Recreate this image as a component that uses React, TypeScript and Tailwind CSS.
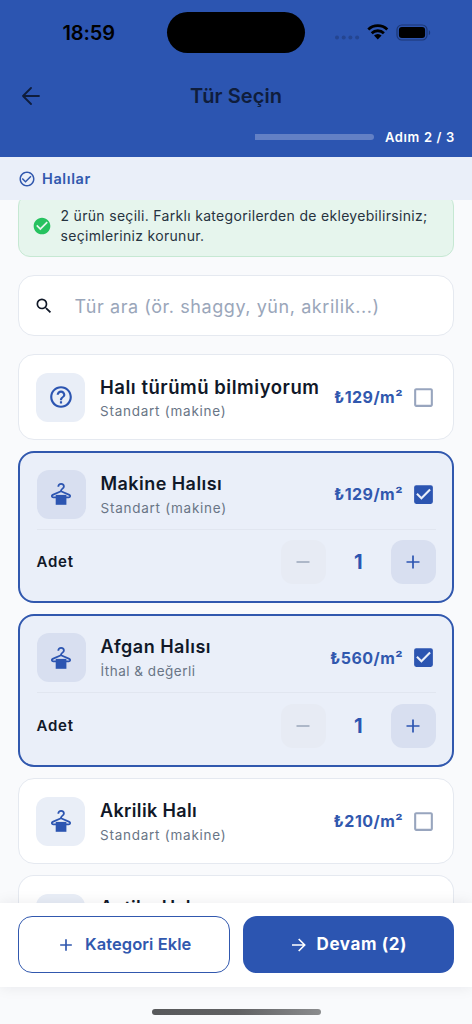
import React from "react";
import {
  MdAdd,
  MdCheckBox,
  MdCheckBoxOutlineBlank,
  MdCheckCircle,
  MdCheckCircleOutline,
  MdHelpOutline,
  MdSearch,
} from "react-icons/md";

type Product = {
  name: string;
  nameClass: string;
  detail: string;
  detailClass: string;
  price: string;
  help?: boolean;
  selected?: boolean;
};

const products: Product[] = [
  { name: "Halı türümü bilmiyorum", nameClass: "text-[18.5px] tracking-[0.53px]", detail: "Standart (makine)", detailClass: "tracking-[0.75px]", price: "₺129/m²", help: true },
  { name: "Makine Halısı", nameClass: "text-[18px] tracking-[0.45px]", detail: "Standart (makine)", detailClass: "tracking-[0.75px]", price: "₺129/m²", selected: true },
  { name: "Afgan Halısı", nameClass: "text-[18px] tracking-[0.5px]", detail: "İthal & değerli", detailClass: "tracking-[0.5px]", price: "₺560/m²", selected: true },
  { name: "Akrilik Halı", nameClass: "text-[18px] tracking-[0.37px]", detail: "Standart (makine)", detailClass: "tracking-[0.75px]", price: "₺210/m²" },
];

function StatusBar() {
  return (
    <div className="flex h-[65px] items-center">
      <div className="w-[167px] pl-[62.5px] text-[20px] font-semibold leading-6 tracking-[-0.1px] text-black">18:59</div>
      <div className="h-[41px] w-[138px] rounded-full bg-black" />
      <svg className="ml-[29px]" width="98" height="20" viewBox="0 0 98 20">
        <g fill="#244591">
          <circle cx="3" cy="14.6" r="2" />
          <circle cx="9.7" cy="14.6" r="2" />
          <circle cx="16.4" cy="14.6" r="2" />
          <circle cx="23.1" cy="14.6" r="2" />
        </g>
        <g fill="none" stroke="#000" strokeWidth="2.8">
          <path d="M34.3 6.4a13.8 13.8 0 0 1 19 0" />
          <path d="M37.7 10.2a8.8 8.8 0 0 1 12.2 0" />
        </g>
        <path d="M40 12.5a5.4 5.4 0 0 1 7.6 0L43.8 16.4z" />
        <rect x="63" y="2" width="30" height="15" rx="4.8" fill="none" stroke="#1c3775" strokeWidth="1.2" />
        <rect x="64.9" y="3.9" width="26.2" height="11.2" rx="3" />
        <path d="M94.8 7.3c1.8.6 1.8 4.2 0 4.8z" fill="#1c3775" />
      </svg>
    </div>
  );
}

function Header() {
  return (
    <header className="h-[157px] shrink-0 bg-[#2c55b1]">
      <StatusBar />
      <div className="grid h-[62px] grid-cols-[1fr_auto_1fr] items-center">
        <svg className="ml-[22px]" width="18" height="18" viewBox="0 0 18 18" fill="none" stroke="#0f1d3c" strokeWidth="1.8" strokeLinecap="round" strokeLinejoin="round">
          <path d="M9 1 1 9l8 8M1 9h16" />
        </svg>
        <h1 className="text-[20px] font-semibold leading-6 tracking-[0.08px] text-[#0f1d3c]">Tür Seçin</h1>
        <span />
      </div>
      <div className="flex h-5 items-center justify-end pr-[17px]">
        <div className="h-[6px] w-[119px] rounded-r-full bg-[#6380c5]" />
        <span className="ml-[11px] text-[13px] font-semibold leading-5 tracking-[0.65px] text-white">Adım 2 / 3</span>
      </div>
    </header>
  );
}

function HangerIcon() {
  return (
    <svg width="24" height="24" viewBox="0 0 24 24" fill="none" stroke="currentColor" strokeWidth="1.8" strokeLinejoin="round">
      <path d="M9.3 4.7C9.3 3 10.500 1.800 12.100 1.800s2.800 1.200 2.800 2.700c0 2.100-2.900 2.200-2.900 4.500" />
      <path d="M12 9.200 3.700 12.900c-1.400.7-1 2.500.6 2.500h15.400c1.600 0 2-1.800.6-2.500z" />
      <path d="M6.700 12.900h10.700v9.900H6.700z" fill="currentColor" stroke="none" />
    </svg>
  );
}

function Stepper() {
  return (
    <div className="mx-[16.5px] flex h-[66px] items-center border-t border-[#e1e6f0]">
      <span className="flex-1 text-[15px] font-semibold tracking-[0.75px] text-[#101828]">Adet</span>
      <button className="flex size-[44.5px] items-center justify-center rounded-xl bg-[#e7ebf4] text-[#9aa6ba]">
        <svg width="14" height="14" viewBox="0 0 14 14" stroke="currentColor" strokeWidth="1.5">
          <path d="M0.5 7h13" />
        </svg>
      </button>
      <span className="w-[65.5px] text-center text-[20px] font-bold text-[#2c55b1]">1</span>
      <button className="flex size-[44.5px] items-center justify-center rounded-xl bg-[#d8dff0] text-[#2c55b1]">
        <svg width="14" height="14" viewBox="0 0 14 14" stroke="currentColor" strokeWidth="1.7">
          <path d="M0.5 7h13M7 0.5v13" />
        </svg>
      </button>
    </div>
  );
}

function ProductCard({ item }: { item: Product }) {
  const frame = item.selected
    ? "h-[152.5px] border-2 border-[#3158ae] bg-[#eaeff9]"
    : "h-[85.5px] border border-[#e5e9f0] bg-white";
  const rowClass = item.selected
    ? "flex h-[76px] items-center pl-[16.5px] pr-4 pt-[7px]"
    : "flex h-[84px] items-center px-[17px]";
  const tile = item.selected ? "bg-[#d8dff0]" : "bg-[#e9eef7]";
  return (
    <article className={`shrink-0 rounded-2xl ${frame}`}>
      <div className={rowClass}>
        <div className={`flex size-[49px] items-center justify-center rounded-xl text-[#2c55b1] ${tile}`}>
          {item.help ? <MdHelpOutline size={26} /> : <HangerIcon />}
        </div>
        <div className="ml-[15px] flex-1 whitespace-nowrap pt-px">
          <h2 className={`font-semibold leading-[26px] text-[#101828] ${item.nameClass}`}>{item.name}</h2>
          <p className={`text-[13.5px] leading-[22px] text-[#697586] ${item.detailClass}`}>{item.detail}</p>
        </div>
        <span className="mr-[8px] text-[16px] font-bold tracking-[0.45px] text-[#3158ae]">{item.price}</span>
        {item.selected ? (
          <MdCheckBox size={25} className="text-[#2c55b1]" />
        ) : (
          <MdCheckBoxOutlineBlank size={25} className="text-[#98a5be]" />
        )}
      </div>
      {item.selected && <Stepper />}
    </article>
  );
}

function PartialCard() {
  return (
    <article className="flex h-[28px] shrink-0 overflow-hidden rounded-t-2xl border border-b-0 border-[#e5e9f0] bg-white px-[17px] pt-[18px]">
      <div className="h-[49px] w-[49px] shrink-0 rounded-xl bg-[#e9eef7]" />
      <h2 className="ml-[15px] mt-px whitespace-nowrap text-[18px] font-semibold leading-[26px] tracking-[0.2px] text-[#101828]">Antika Halı</h2>
    </article>
  );
}

export default function App() {
  return (
    <div className="flex h-[1024px] w-[472px] flex-col overflow-hidden bg-[#f9fafc] font-['Inter','Noto_Sans',sans-serif]">
      <Header />
      <div className="flex h-[43px] shrink-0 items-center gap-[6px] bg-[#eaeff9] pl-[18px] text-[#3158ae]">
        <MdCheckCircleOutline size={18} />
        <span className="text-[14.5px] font-semibold tracking-[0.6px]">Halılar</span>
      </div>
      <main className="h-[703px] shrink-0 overflow-hidden px-[18px]">
        <div className="-mt-[6px] flex h-[63px] items-center rounded-xl border border-[#c6e8d3] bg-[#e6f5ed] pl-[13px]">
          <MdCheckCircle size={20} className="shrink-0 text-[#26c25f]" />
          <p className="ml-[8.5px] whitespace-nowrap text-[14px] leading-5 tracking-[0.31px] text-[#26333f]">
            2 ürün seçili. Farklı kategorilerden de ekleyebilirsiniz;
            <br />
            seçimleriniz korunur.
          </p>
        </div>
        <div className="mt-[18px] flex h-[61px] items-center rounded-2xl border border-[#e5e9f0] bg-white pl-[15px]">
          <MdSearch size={20} className="text-[#101828]" />
          <span className="ml-[20.5px] whitespace-nowrap pt-px text-[18px] tracking-[0.57px] text-[#9aa6ba]">Tür ara (ör. shaggy, yün, akrilik...)</span>
        </div>
        <div className="mt-[18px] flex flex-col gap-[11.2px]">
          {products.map((item) => (
            <ProductCard key={item.name} item={item} />
          ))}
          <PartialCard />
        </div>
      </main>
      <footer className="z-10 grid h-[84px] shrink-0 grid-cols-2 gap-[13px] bg-white px-[18px] pt-[13px] shadow-[0_0_14px_rgba(16,24,40,0.08)]">
        <button className="flex h-[57px] items-center justify-center rounded-[14px] border border-[#3158ae] text-[#3158ae]">
          <MdAdd size={20} />
          <span className="ml-[9px] text-[16.5px] font-semibold tracking-[0.06px]">Kategori Ekle</span>
        </button>
        <button className="flex h-[57px] items-center justify-center rounded-[14px] bg-[#2c55b1] pl-[2px] text-white">
          <svg width="14" height="14" viewBox="0 0 14 14" fill="none" stroke="currentColor" strokeWidth="1.6">
            <path d="M0 7H12.5M6.7 1l6 6-6 6" />
          </svg>
          <span className="ml-[11px] pt-px text-[17px] font-bold tracking-[0.6px]">Devam (2)</span>
        </button>
      </footer>
      <div className="flex flex-1 items-center justify-center pt-[13px]">
        <div className="h-[6px] w-[169px] rounded-full bg-gradient-to-r from-[#58595b] via-[#606163] to-[#8b8c8e]" />
      </div>
    </div>
  );
}
